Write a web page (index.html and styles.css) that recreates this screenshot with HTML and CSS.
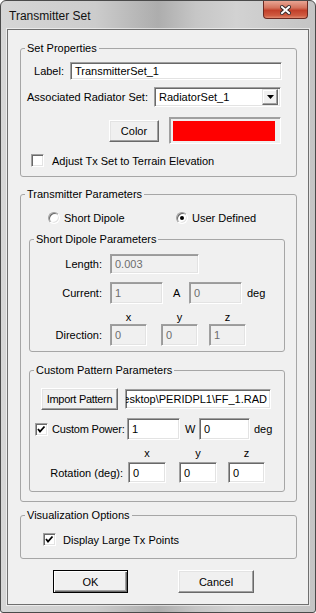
FILE: index.html
```html
<!DOCTYPE html>
<html lang="en">
  <head>
    <meta charset="UTF-8" />
    <meta name="viewport" content="width=device-width, initial-scale=1.0" />
    <title>Transmitter Set</title>
    <link rel="stylesheet" href="styles.css">
  </head>
  <body>
    <div class="window">
      <div class="titlebar">
        <span class="title">Transmitter Set</span>
        <div class="close">
          <svg width="11" height="10" viewBox="0 0 11 10">
            <path d="M2 2 L9 8 M9 2 L2 8" stroke="#3a2a2a" stroke-width="4" stroke-linecap="square" fill="none" />
            <path d="M2 2 L9 8 M9 2 L2 8" stroke="#fff" stroke-width="2" stroke-linecap="square" fill="none" />
          </svg>
        </div>
      </div>

      <div class="client">
        <!-- Set Properties -->
        <fieldset class="group outer set-props">
          <legend>Set Properties</legend>
          <div class="row r-label">
            <span class="lbl w-label">Label:</span>
            <div class="field w-label-field">TransmitterSet_1</div>
          </div>
          <div class="row r-radset">
            <span class="lbl w-radset">Associated Radiator Set:</span>
            <div class="field select">
              <span>RadiatorSet_1</span>
              <div class="drop">
                <svg width="7" height="4" viewBox="0 0 7 4"><path d="M0 0 H7 L3.5 4 Z" fill="#000" /></svg>
              </div>
            </div>
          </div>
          <div class="row r-color">
            <div class="btn w-color">Color</div>
            <div class="swatch"><div class="swatch-fill"></div></div>
          </div>
          <div class="row r-adjust">
            <div class="check"></div>
            <span class="check-text">Adjust Tx Set to Terrain Elevation</span>
          </div>
        </fieldset>

        <!-- Transmitter Parameters -->
        <fieldset class="group outer tx-params">
          <legend>Transmitter Parameters</legend>
          <div class="row radios">
            <div class="option opt-first">
              <div class="radio"></div>
              <span>Short Dipole</span>
            </div>
            <div class="option">
              <div class="radio on"></div>
              <span>User Defined</span>
            </div>
          </div>

          <fieldset class="group inner dipole">
            <legend>Short Dipole Parameters</legend>
            <div class="row r-length">
              <span class="lbl w-dip">Length:</span>
              <div class="field off w-length">0.003</div>
            </div>
            <div class="row r-current">
              <span class="lbl w-dip">Current:</span>
              <div class="field off w-53">1</div>
              <span class="unit-a">A</span>
              <div class="field off w-53">0</div>
              <span class="unit-deg">deg</span>
            </div>
            <div class="row r-axes">
              <span class="axes-space-dip"></span>
              <span class="axis w-37">x</span>
              <span class="axis w-37 gap-14">y</span>
              <span class="axis w-37 gap-11">z</span>
            </div>
            <div class="row r-direction">
              <span class="lbl w-dip">Direction:</span>
              <div class="field off w-37">0</div>
              <div class="field off w-37 gap-14">0</div>
              <div class="field off w-37 gap-11">1</div>
            </div>
          </fieldset>

          <fieldset class="group inner custom">
            <legend>Custom Pattern Parameters</legend>
            <div class="row r-import">
              <div class="btn w-import">Import Pattern</div>
              <div class="field path"><span>Desktop\PERIDPL1\FF_1.RAD</span></div>
            </div>
            <div class="row r-power">
              <div class="check on">
                <svg width="11" height="11" viewBox="0 0 11 11"><path d="M2 5 L4 7.5 L8.5 2.5" stroke="#000" stroke-width="1.8" fill="none" /></svg>
              </div>
              <span class="power-text">Custom Power:</span>
              <div class="field w-53">1</div>
              <span class="unit-w">W</span>
              <div class="field w-51">0</div>
              <span class="unit-deg2">deg</span>
            </div>
            <div class="row r-axes2">
              <span class="axes-space-rot"></span>
              <span class="axis w-38">x</span>
              <span class="axis w-38 gap-13">y</span>
              <span class="axis w-37 gap-11">z</span>
            </div>
            <div class="row r-rotation">
              <span class="lbl w-rot">Rotation (deg):</span>
              <div class="field w-38">0</div>
              <div class="field w-38 gap-13">0</div>
              <div class="field w-37 gap-11">0</div>
            </div>
          </fieldset>
        </fieldset>

        <!-- Visualization Options -->
        <fieldset class="group outer vis">
          <legend>Visualization Options</legend>
          <div class="row r-large">
            <div class="check on">
              <svg width="11" height="11" viewBox="0 0 11 11"><path d="M2 5 L4 7.5 L8.5 2.5" stroke="#000" stroke-width="1.8" fill="none" /></svg>
            </div>
            <span class="large-text">Display Large Tx Points</span>
          </div>
        </fieldset>

        <div class="row buttons">
          <div class="btn default w-ok">OK</div>
          <div class="btn w-cancel">Cancel</div>
        </div>
      </div>
    </div>
  </body>
</html>
```

FILE: styles.css
```css
body {
  margin: 0;
  font-family: "Liberation Sans", Arial, sans-serif;
  font-size: 11px;
  color: #000;
  background: #fff;
}

.window {
  width: 314px;
  height: 611px;
  border: 1px solid #4a4a4a;
  border-radius: 6px 6px 3px 3px;
  background: linear-gradient(90deg, #d6d6d6 0%, #cccccc 30%, #adadad 50%, #c6c6c6 62%, #d2d2d2 75%, #c4c4c4 100%);
  display: flex;
  flex-direction: column;
}

.titlebar {
  height: 28px;
  display: flex;
  align-items: flex-start;
}

.title {
  font-size: 12px;
  padding: 8px 0 0 8px;
  color: #111;
}

.close {
  margin-left: auto;
  margin-right: 7px;
  width: 45px;
  height: 18px;
  box-sizing: border-box;
  border: 1px solid #6b2a22;
  border-top: none;
  border-radius: 0 0 4px 4px;
  background: linear-gradient(#e9a594 0%, #d4735d 40%, #c2402a 55%, #cf5a40 85%, #e08a70 100%);
  display: flex;
  align-items: center;
  justify-content: center;
}

.close svg {
  display: block;
}

.client {
  margin: 0 6px;
  height: 574px;
  border: 1px solid #6f6f6f;
  background: #f0f0f0;
  box-shadow: 0 0 0 1px rgba(255, 255, 255, 0.55);
}

/* group boxes */
.group {
  margin: 0;
  padding: 0;
  min-width: 0;
  box-sizing: border-box;
  border: 1px solid #a6a6a6;
  border-radius: 3px;
}

.group legend {
  margin-left: 4px;
  padding: 0 2px;
  line-height: 13px;
  height: 13px;
}

.outer {
  margin-left: 12px;
  width: 277px;
}

.inner {
  margin-left: 8px;
  width: 256px;
}

.set-props {
  margin-top: 12px;
  padding-bottom: 9px;
}

.tx-params {
  margin-top: 11px;
  padding-bottom: 9px;
}

.dipole {
  margin-top: 9px;
  padding-bottom: 5px;
}

.custom {
  margin-top: 12px;
  padding-bottom: 8px;
}

.vis {
  margin-top: 7px;
  padding-bottom: 12px;
}

.row {
  display: flex;
  align-items: center;
  white-space: nowrap;
}

.lbl {
  text-align: right;
  flex: none;
}

/* controls */
.field {
  box-sizing: border-box;
  height: 100%;
  border: 1px solid;
  border-color: #a0a0a0 #fff #fff #a0a0a0;
  box-shadow: inset 1px 1px 0 #696969, inset -1px -1px 0 #e3e3e3;
  background: #fff;
  padding: 0 4px;
  display: flex;
  align-items: center;
  overflow: hidden;
  flex: none;
}

.field.off {
  background: #f0f0f0;
  color: #6d6d6d;
  border-color: #a0a0a0 #fff #fff #a0a0a0;
  box-shadow: inset 1px 1px 0 #9a9a9a, inset -1px -1px 0 #e3e3e3;
}

.btn {
  box-sizing: border-box;
  height: 100%;
  border: 1px solid;
  border-color: #fff #696969 #696969 #fff;
  box-shadow: inset -1px -1px 0 #a0a0a0, inset 1px 1px 0 #e3e3e3;
  background: #f0f0f0;
  display: flex;
  align-items: center;
  justify-content: center;
  flex: none;
}

.btn.default {
  border-color: #000;
  box-shadow: inset 1px 1px 0 #fff, inset -1px -1px 0 #696969, inset -2px -2px 0 #a0a0a0;
}

.check {
  width: 13px;
  height: 13px;
  box-sizing: border-box;
  border: 1px solid;
  border-color: #a0a0a0 #fff #fff #a0a0a0;
  box-shadow: inset 1px 1px 0 #696969, inset -1px -1px 0 #e3e3e3;
  background: #fff;
  flex: none;
}

.check svg {
  display: block;
}

.radio {
  position: relative;
  width: 12px;
  height: 12px;
  box-sizing: border-box;
  border-radius: 50%;
  border: 1px solid;
  border-color: #a0a0a0 #fff #fff #a0a0a0;
  box-shadow: inset 1px 1px 0 #696969, inset -1px -1px 0 #e3e3e3;
  background: #fff;
  flex: none;
}

.radio.on::after {
  content: "";
  position: absolute;
  left: 3px;
  top: 3px;
  width: 4px;
  height: 4px;
  border-radius: 50%;
  background: #000;
}

/* set properties */
.r-label {
  margin-top: 7px;
  height: 18px;
}

.w-label {
  width: 43px;
  margin-right: 6px;
}

.w-label-field {
  width: 212px;
}

.r-radset {
  margin-top: 7px;
  height: 20px;
}

.w-radset {
  width: 127px;
  margin-right: 6px;
}

.select {
  width: 127px;
  padding: 0 2px 0 4px;
}

.drop {
  margin-left: auto;
  width: 16px;
  height: 16px;
  box-sizing: border-box;
  border: 1px solid;
  border-color: #e3e3e3 #696969 #696969 #e3e3e3;
  box-shadow: inset -1px -1px 0 #a0a0a0, inset 1px 1px 0 #fff;
  background: #f0f0f0;
  display: flex;
  align-items: center;
  justify-content: center;
}

.drop svg {
  display: block;
}

.r-color {
  margin-top: 10px;
  height: 27px;
  padding-left: 88px;
}

.w-color {
  width: 50px;
  height: 22px;
}

.swatch {
  margin-left: 10px;
  width: 112px;
  height: 27px;
  box-sizing: border-box;
  border: 1px solid;
  border-color: #a0a0a0 #fff #fff #a0a0a0;
  box-shadow: 1px 1px 0 #a0a0a0 inset;
  padding: 3px 5px 2px 3px;
}

.swatch-fill {
  height: 100%;
  background: #ff0000;
}

.r-adjust {
  margin-top: 10px;
  height: 13px;
  padding-left: 10px;
}

.check-text {
  margin-left: 8px;
}

/* transmitter parameters */
.radios {
  margin-top: 10px;
  height: 13px;
  padding-left: 27px;
}

.option {
  display: flex;
  align-items: center;
}

.option span {
  margin-left: 4px;
}

.opt-first {
  width: 128px;
}

.w-dip {
  width: 72px;
  margin-right: 8px;
}

.r-length {
  margin-top: 8px;
  height: 20px;
}

.w-length {
  width: 89px;
}

.r-current {
  margin-top: 8px;
  height: 22px;
}

.w-53 {
  width: 53px;
}

.w-51 {
  width: 51px;
}

.w-37 {
  width: 37px;
}

.w-38 {
  width: 38px;
}

.gap-14 {
  margin-left: 14px;
}

.gap-13 {
  margin-left: 13px;
}

.gap-11 {
  margin-left: 11px;
}

.unit-a {
  width: 16px;
  padding-left: 10px;
}

.unit-deg {
  margin-left: 5px;
}

.r-axes {
  margin-top: 6px;
  height: 13px;
}

.axes-space-dip {
  width: 80px;
  flex: none;
}

.axis {
  text-align: center;
  flex: none;
}

.r-direction {
  margin-top: 1px;
  height: 22px;
}

/* custom pattern */
.r-import {
  margin-top: 11px;
  height: 22px;
  padding-left: 11px;
}

.w-import {
  width: 77px;
  letter-spacing: -0.3px;
}

.path {
  margin-left: 7px;
  width: 146px;
  height: 20px;
  justify-content: flex-end;
  padding-right: 3px;
}

.r-power {
  margin-top: 8px;
  height: 22px;
  padding-left: 5px;
}

.power-text {
  margin-left: 4px;
  width: 75px;
  letter-spacing: -0.2px;
}

.unit-w {
  width: 14px;
  padding-left: 5px;
}

.unit-deg2 {
  margin-left: 4px;
}

.r-axes2 {
  margin-top: 6px;
  height: 13px;
}

.axes-space-rot {
  width: 98px;
  flex: none;
}

.r-rotation {
  margin-top: 3px;
  height: 21px;
}

.w-rot {
  width: 93px;
  margin-right: 5px;
}

/* visualization */
.r-large {
  margin-top: 11px;
  height: 13px;
  padding-left: 22px;
}

.large-text {
  margin-left: 7px;
}

.buttons {
  margin-top: 11px;
  height: 23px;
  padding-left: 45px;
}

.w-ok {
  width: 75px;
}

.w-cancel {
  width: 76px;
  margin-left: 50px;
}
```
